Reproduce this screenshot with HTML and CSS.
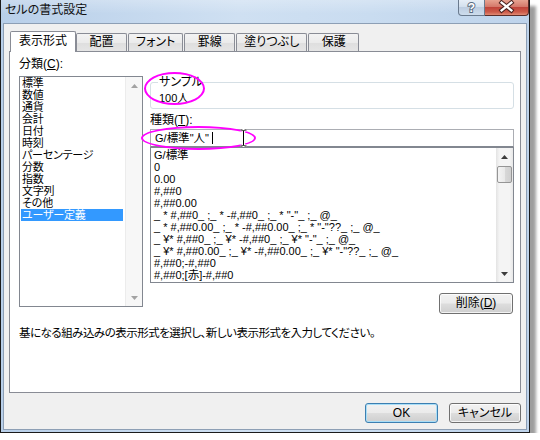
FILE: index.html
```html
<!DOCTYPE html>
<html lang="ja">
<head>
<meta charset="utf-8">
<title>セルの書式設定</title>
<link rel="stylesheet" href="styles.css">
</head>
<body>
<div class="window">
  <div class="titlebar">
    <span class="title">セルの書式設定</span>
    <div class="caption-buttons">
      <div class="cap-btn help">
        <svg width="27" height="16" viewBox="0 0 27 16"><text x="13.5" y="12" text-anchor="middle" class="cap-glyph">?</text></svg>
      </div>
      <div class="cap-btn close">
        <svg width="44" height="16" viewBox="0 0 44 16"><path d="M17 2.5 L27 10.5 M27 2.5 L17 10.5" class="x-outline"/><path d="M17 2.5 L27 10.5 M27 2.5 L17 10.5" class="x-fill"/></svg>
      </div>
    </div>
  </div>
  <div class="client">
    <div class="tabs">
      <div class="tab selected">表示形式</div>
      <div class="tab">配置</div>
      <div class="tab">フォント</div>
      <div class="tab">罫線</div>
      <div class="tab">塗りつぶし</div>
      <div class="tab">保護</div>
    </div>
    <div class="panel">
      <div class="columns">
        <div class="col-left">
          <div class="label">分類(<u>C</u>):</div>
          <div class="listbox cat">
            <ul class="items">
              <li>標準</li>
              <li>数値</li>
              <li>通貨</li>
              <li>会計</li>
              <li>日付</li>
              <li>時刻</li>
              <li>パーセンテージ</li>
              <li>分数</li>
              <li>指数</li>
              <li>文字列</li>
              <li>その他</li>
              <li class="sel">ユーザー定義</li>
            </ul>
            <div class="vscroll disabled">
              <div class="arrow"><svg width="7" height="4" viewBox="0 0 7 4"><path d="M0 4 L3.5 0 L7 4Z"/></svg></div>
              <div class="track"></div>
              <div class="arrow"><svg width="7" height="4" viewBox="0 0 7 4"><path d="M0 0 L3.5 4 L7 0Z"/></svg></div>
            </div>
          </div>
        </div>
        <div class="col-right">
          <fieldset class="sample">
            <legend>サンプル</legend>
            <div class="sample-value latin">100<span class="cjk">人</span></div>
          </fieldset>
          <div class="label kind">種類(<u>T</u>):</div>
          <div class="textbox latin">G/<span class="cjk">標準</span>"<span class="cjk">人</span>"<span class="caret"></span></div>
          <div class="listbox fmt">
            <ul class="items latin">
              <li>G/<span class="cjk">標準</span></li>
              <li>0</li>
              <li>0.00</li>
              <li>#,##0</li>
              <li>#,##0.00</li>
              <li>_ * #,##0_ ;_ * -#,##0_ ;_ * "-"_ ;_ @_</li>
              <li>_ * #,##0.00_ ;_ * -#,##0.00_ ;_ * "-"??_ ;_ @_</li>
              <li>_ ¥* #,##0_ ;_ ¥* -#,##0_ ;_ ¥* "-"_ ;_ @_</li>
              <li>_ ¥* #,##0.00_ ;_ ¥* -#,##0.00_ ;_ ¥* "-"??_ ;_ @_</li>
              <li>#,##0;-#,##0</li>
              <li>#,##0;[<span class="cjk">赤</span>]-#,##0</li>
            </ul>
            <div class="vscroll">
              <div class="arrow"><svg width="7" height="4" viewBox="0 0 7 4"><path d="M0 4 L3.5 0 L7 4Z"/></svg></div>
              <div class="track"><div class="thumb"></div></div>
              <div class="arrow"><svg width="7" height="4" viewBox="0 0 7 4"><path d="M0 0 L3.5 4 L7 0Z"/></svg></div>
            </div>
          </div>
          <div class="btn-row">
            <button class="btn btn-delete">削除(<u>D</u>)</button>
          </div>
        </div>
      </div>
      <p class="desc">基になる組み込みの表示形式を選択し、新しい表示形式を入力してください。</p>
    </div>
    <div class="dialog-buttons">
      <button class="btn default">OK</button>
      <button class="btn">キャンセル</button>
    </div>
  </div>
  <div class="mark mark-sample"></div>
  <div class="mark mark-input"></div>
  <svg class="ibeam" width="7" height="18" viewBox="0 0 7 18">
    <path d="M0.5 1 H2.5 L3.5 2 L4.5 1 H6.5 M3.5 2 V16 M0.5 17 H2.5 L3.5 16 L4.5 17 H6.5" class="ibeam-outline"/>
    <path d="M0.5 1 H2.5 L3.5 2 L4.5 1 H6.5 M3.5 2 V16 M0.5 17 H2.5 L3.5 16 L4.5 17 H6.5" class="ibeam-line"/>
  </svg>
</div>
</body>
</html>
```

FILE: styles.css
```css
* { box-sizing: border-box; }

html, body {
  margin: 0;
  padding: 0;
  background: #ffffff;
}

body {
  font-family: "Liberation Sans", "Noto Sans CJK JP", sans-serif;
  font-size: 12px;
  color: #000;
  font-feature-settings: "palt";
}

.latin {
  font-size: 11px;
  font-feature-settings: normal;
}

.cjk {
  font-size: 11.5px;
}

/* ---------- window frame ---------- */
.window {
  position: relative;
  width: 530px;
  height: 433px;
  border: 1px solid #1b1b1b;
  border-top: none;
  padding: 0 2px 2px;
  background: linear-gradient(to right, #b8cfe9 0%, #cfe0f2 45%, #c9dcf0 70%, #bed3eb 100%);
  box-shadow: 6px 6px 3px rgba(0, 0, 0, 0.38);
  display: flex;
  flex-direction: column;
}

.titlebar {
  height: 23px;
  margin: 0 -2px;
  display: flex;
  align-items: flex-start;
  background: linear-gradient(to bottom, rgba(255,255,255,0.25), rgba(255,255,255,0) 60%);
}

.title {
  padding-left: 4px;
  line-height: 20px;
  font-size: 12px;
  color: #111;
}

.caption-buttons {
  margin-left: auto;
  display: flex;
}

.cap-btn {
  height: 16px;
  border: 1px solid #6a7a8e;
  border-top: none;
  display: flex;
}

.cap-btn.help {
  width: 27px;
  border-radius: 0 0 0 4px;
  background: linear-gradient(to bottom, #e6eef7 0%, #d3e0ee 45%, #bdcde1 50%, #cddcec 100%);
}

.cap-btn.close {
  width: 44px;
  border-color: #5a2c28;
  border-left: none;
  border-radius: 0 0 4px 0;
  background: linear-gradient(to bottom, #e7a391 0%, #d4786a 45%, #c0443a 50%, #cd5b4a 80%, #e08a74 100%);
}

.cap-glyph {
  font-family: "Liberation Sans", sans-serif;
  font-weight: bold;
  font-size: 13px;
  fill: #ffffff;
  stroke: #596a80;
  stroke-width: 2px;
  paint-order: stroke;
}

.x-outline {
  stroke: #4a2320;
  stroke-width: 4.5;
  stroke-linecap: square;
  fill: none;
}

.x-fill {
  stroke: #ffffff;
  stroke-width: 2.4;
  stroke-linecap: square;
  fill: none;
}

/* ---------- client area ---------- */
.client {
  flex: 1;
  border: 1px solid #8d9fb5;
  background: #f0f0f0;
  display: flex;
  flex-direction: column;
}

.tabs {
  display: flex;
  align-items: flex-end;
  padding: 7px 0 0 6px;
}

.tab {
  position: relative;
  height: 18px;
  min-width: 51px;
  line-height: 17px;
  padding: 0 7px;
  text-align: center;
  border: 1px solid #898c95;
  border-bottom: none;
  border-radius: 2px 2px 0 0;
  background: linear-gradient(to bottom, #f3f3f3 0%, #ebebeb 50%, #dedede 51%, #e5e5e5 100%);
  white-space: nowrap;
  margin-left: 1px;
}

.tab.selected {
  height: 21px;
  line-height: 19px;
  padding: 0 8px;
  margin: 0 -1px -1px 0;
  background: #ffffff;
  z-index: 1;
}

.panel {
  height: 342px;
  margin: 0 5px;
  border: 1px solid #898c95;
  background: #ffffff;
  padding: 5px 6px 0 9px;
}

.columns {
  display: grid;
  grid-template-columns: 124px 364px;
  column-gap: 7px;
  align-items: start;
}

.label {
  line-height: 14px;
  white-space: nowrap;
}

.col-left .label {
  margin-bottom: 5px;
}

/* ---------- list boxes ---------- */
.listbox {
  display: flex;
  background: #ffffff;
  border: 1px solid #828790;
}

.listbox .items {
  list-style: none;
  margin: 0;
  flex: 1;
  min-width: 0;
}

.listbox .items li {
  height: 12px;
  line-height: 12px;
  white-space: nowrap;
}

.listbox.cat {
  height: 231px;
}

.listbox.cat .items {
  padding: 0 2px 0 1px;
  font-size: 11px;
  letter-spacing: -0.2px;
}

.listbox.cat .items li {
  padding-left: 1px;
}

.listbox.cat .items li.sel {
  background: #3399ff;
  color: #ffffff;
}

.listbox.fmt {
  height: 136px;
}

.listbox.fmt .items {
  padding: 1px 0 0 3px;
}

.vscroll {
  width: 17px;
  flex: none;
  display: flex;
  flex-direction: column;
  background: linear-gradient(to right, #e3e3e3 0%, #f4f4f4 20%, #f4f4f4 80%, #e8e8e8 100%);
}

.vscroll .arrow {
  height: 17px;
  display: flex;
  align-items: center;
  justify-content: center;
}

.vscroll .arrow svg path {
  fill: #3c3c3c;
}

.vscroll.disabled {
  background: #f7f7f7;
  border-left: 1px solid #ececec;
}

.vscroll.disabled .arrow svg path {
  fill: #a3a3a3;
}

.vscroll .track {
  flex: 1;
  padding: 1px 1px 0;
}

.thumb {
  height: 17px;
  border: 1px solid #959595;
  border-radius: 2px;
  background: linear-gradient(to right, #f4f4f4 0%, #e9e9e9 50%, #d9d9d9 51%, #cfcfcf 100%);
}

/* ---------- right column ---------- */
.sample {
  margin: 18px 0 0;
  padding: 2px 7px 3px;
  border: 1px solid #d5dfe5;
  border-radius: 3px;
  min-width: 0;
}

.sample legend {
  padding: 0 0 0 1px;
  line-height: 14px;
}

.sample-value {
  line-height: 14px;
  padding-left: 1px;
}

.label.kind {
  margin: 4px 0 2px;
}

.textbox {
  height: 18px;
  border: 1px solid #abadb3;
  border-bottom-color: #828790;
  background: #ffffff;
  padding-left: 4px;
  line-height: 16px;
  white-space: nowrap;
}

.caret {
  display: inline-block;
  width: 1px;
  height: 12px;
  margin-left: 3px;
  background: #000;
  vertical-align: -2px;
}

.btn-row {
  display: flex;
  justify-content: flex-end;
  margin-top: 10px;
  padding-right: 1px;
}

/* ---------- buttons ---------- */
.btn {
  height: 21px;
  border: 1px solid #707070;
  border-radius: 3px;
  background: linear-gradient(to bottom, #f2f2f2 0%, #ebebeb 48%, #dddddd 52%, #cfcfcf 100%);
  box-shadow: inset 0 0 0 1px rgba(255, 255, 255, 0.75);
  font-family: "Liberation Sans", "Noto Sans CJK JP", sans-serif;
  font-size: 12px;
  font-feature-settings: "palt";
  line-height: 17px;
  color: #000;
  padding: 0;
}

.btn-delete {
  width: 74px;
}

.desc {
  margin: 12px 0 0;
  line-height: 14px;
  font-size: 11.5px;
  letter-spacing: -0.5px;
  white-space: nowrap;
}

.dialog-buttons {
  display: flex;
  justify-content: flex-end;
  gap: 11px;
  margin-top: 10px;
  padding-right: 5px;
}

.dialog-buttons .btn {
  width: 73px;
  height: 20px;
  line-height: 16px;
}

.dialog-buttons .btn + .btn {
  width: 72px;
}

.btn.default {
  border-color: #3c7fb1;
  box-shadow: inset 0 0 0 1px #a9def7;
}

/* ---------- annotations ---------- */
.mark {
  position: absolute;
  border: 2px solid #ff00ff;
  border-radius: 50%;
}

.mark-sample {
  left: 143px;
  top: 72px;
  width: 61px;
  height: 33px;
}

.mark-input {
  left: 140px;
  top: 126px;
  width: 115px;
  height: 24px;
}

.ibeam {
  position: absolute;
  left: 239px;
  top: 129px;
}

.ibeam-outline {
  stroke: #ffffff;
  stroke-width: 3;
  fill: none;
}

.ibeam-line {
  stroke: #000000;
  stroke-width: 1;
  fill: none;
}
```
